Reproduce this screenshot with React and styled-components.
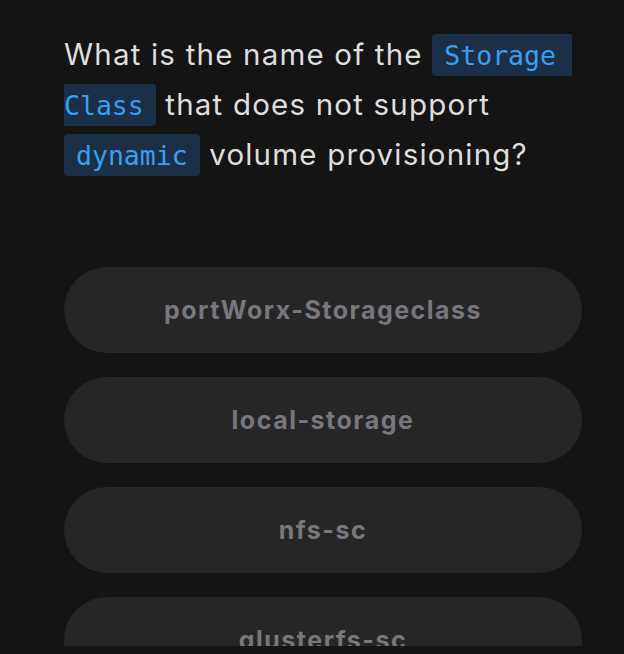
import React from 'react';
import styled, { createGlobalStyle } from 'styled-components';

const GlobalStyle = createGlobalStyle`
  html, body {
    margin: 0;
    padding: 0;
    background: #141414;
  }
`;

const Screen = styled.div`
  height: 646px;
  overflow: hidden;
  background: #141414;
  padding: 29px 42px 0 64px;
  box-sizing: border-box;
  font-family: Inter, 'Noto Sans', sans-serif;
`;

const Question = styled.p`
  margin: 0 0 88px;
  font-size: 29.5px;
  letter-spacing: 1.2px;
  line-height: 50px;
  color: #dedede;
`;

const Code = styled.code`
  font-family: 'DejaVu Sans Mono', monospace;
  font-size: 26.5px;
  line-height: 1;
  letter-spacing: 0;
  color: #3a9ff2;
  background: #1b3047;
  padding: 6px 12px 5px;
  border-radius: 4px;
  box-decoration-break: slice;
  -webkit-box-decoration-break: slice;
`;

const Options = styled.div`
  display: flex;
  flex-direction: column;
  gap: 24px;
`;

const Option = styled.button`
  height: 86px;
  padding: 0;
  border: none;
  border-radius: 43px;
  background: #262626;
  color: #77777d;
  font-family: Inter, 'Noto Sans', sans-serif;
  font-size: 25px;
  font-weight: 700;
  letter-spacing: 1.5px;
  display: flex;
  align-items: center;
  justify-content: center;
  flex-shrink: 0;
  cursor: pointer;
`;

const options = ['portWorx-Storageclass', 'local-storage', 'nfs-sc', 'glusterfs-sc'];

export default function App() {
  return (
    <>
      <GlobalStyle />
      <Screen>
        <Question>
          What is the name of the <Code>{'Storage\u00a0\u200bClass'}</Code> that does not support{' '}
          <Code>dynamic</Code> volume provisioning?
        </Question>
        <Options>
          {options.map((o) => (
            <Option key={o}>{o}</Option>
          ))}
        </Options>
      </Screen>
    </>
  );
}
